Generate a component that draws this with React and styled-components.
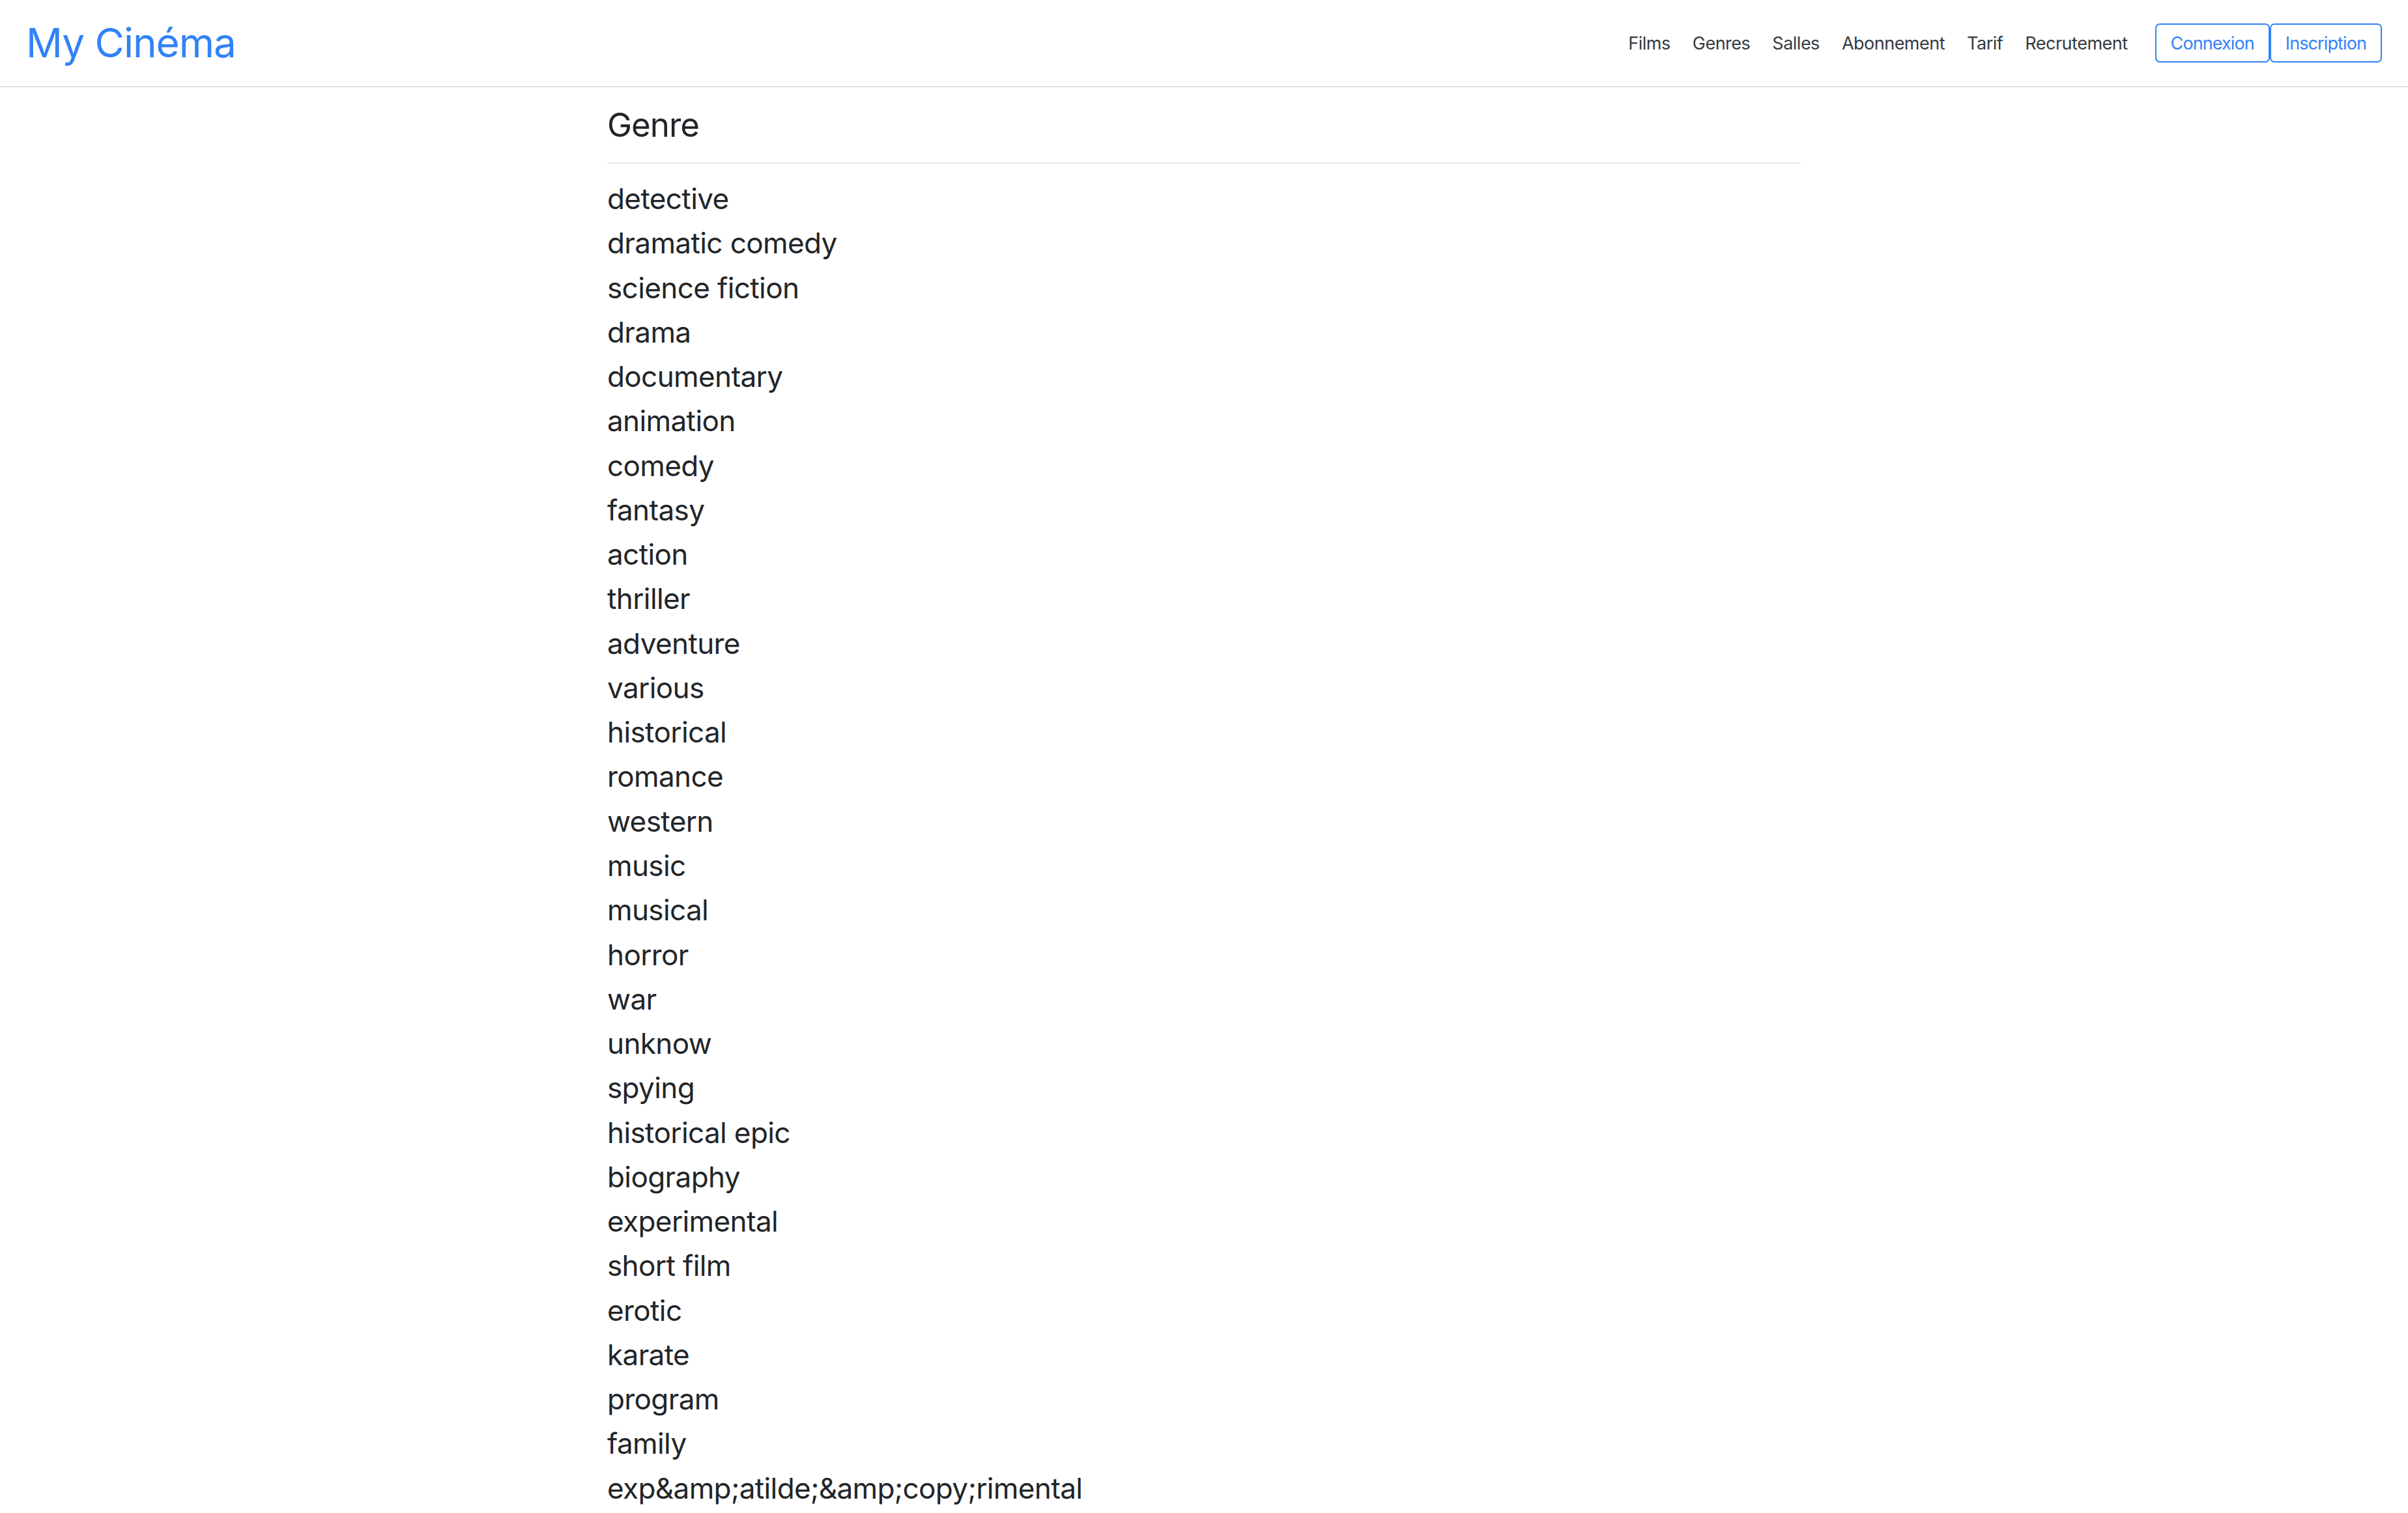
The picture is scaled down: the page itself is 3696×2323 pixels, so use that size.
import React from 'react';
import styled, { createGlobalStyle } from 'styled-components';

const GlobalStyle = createGlobalStyle`
  html, body {
    margin: 0;
    padding: 0;
    background: #fff;
  }
  body {
    font-family: Inter, "Noto Sans", "Liberation Sans", sans-serif;
    color: #212529;
  }
`;

const Navbar = styled.nav`
  height: 132px;
  display: flex;
  align-items: center;
  justify-content: space-between;
  padding: 0 40px 0 40px;
  border-bottom: 2px solid #dee2e6;
`;

const Brand = styled.a`
  font-size: 62px;
  line-height: 1;
  color: #3182f6;
  text-decoration: none;
  letter-spacing: -1px;
`;

const NavRight = styled.div`
  display: flex;
  align-items: center;
`;

const NavList = styled.ul`
  display: flex;
  list-style: none;
  margin: 0 25px 0 0;
  padding: 0;
`;

const NavLink = styled.a`
  display: block;
  padding: 0 17px;
  font-size: 27px;
  letter-spacing: -0.5px;
  color: #343a40;
  text-decoration: none;
`;

const ButtonGroup = styled.div`
  display: flex;
`;

const OutlineButton = styled.button`
  height: 60px;
  padding: 0 22px;
  font-family: inherit;
  font-size: 27px;
  letter-spacing: -0.9px;
  color: #3182f6;
  background: #fff;
  border: 2.4px solid #3182f6;
  border-radius: 7px;
  cursor: pointer;
`;

const Main = styled.main`
  width: 1832px;
  margin: 0 auto;
`;

const Title = styled.h4`
  margin: 24px 0 0 0;
  font-size: 51px;
  font-weight: 400;
  letter-spacing: -1px;
  line-height: 67px;
`;

const Divider = styled.hr`
  margin: 24px 0 20px 0;
  border: 0;
  border-top: 2.4px solid #e7e7e8;
`;

const GenreList = styled.ul`
  list-style: none;
  margin: 0;
  padding: 0;
`;

const GenreItem = styled.li`
  height: 68.28px;
  line-height: 68.28px;
  font-size: 44px;
  letter-spacing: -0.6px;
`;

const genres = [
  'detective',
  'dramatic comedy',
  'science fiction',
  'drama',
  'documentary',
  'animation',
  'comedy',
  'fantasy',
  'action',
  'thriller',
  'adventure',
  'various',
  'historical',
  'romance',
  'western',
  'music',
  'musical',
  'horror',
  'war',
  'unknow',
  'spying',
  'historical epic',
  'biography',
  'experimental',
  'short film',
  'erotic',
  'karate',
  'program',
  'family',
  'exp&amp;atilde;&amp;copy;rimental',
];

const links = ['Films', 'Genres', 'Salles', 'Abonnement', 'Tarif', 'Recrutement'];

const App = () => (
  <>
    <GlobalStyle />
    <Navbar>
      <Brand href="#">My Cinéma</Brand>
      <NavRight>
        <NavList>
          {links.map((l) => (
            <li key={l}>
              <NavLink href="#">{l}</NavLink>
            </li>
          ))}
        </NavList>
        <ButtonGroup>
          <OutlineButton>Connexion</OutlineButton>
          <OutlineButton>Inscription</OutlineButton>
        </ButtonGroup>
      </NavRight>
    </Navbar>
    <Main>
      <Title>Genre</Title>
      <Divider />
      <GenreList>
        {genres.map((g) => (
          <GenreItem key={g}>{g}</GenreItem>
        ))}
      </GenreList>
    </Main>
  </>
);

export default App;
